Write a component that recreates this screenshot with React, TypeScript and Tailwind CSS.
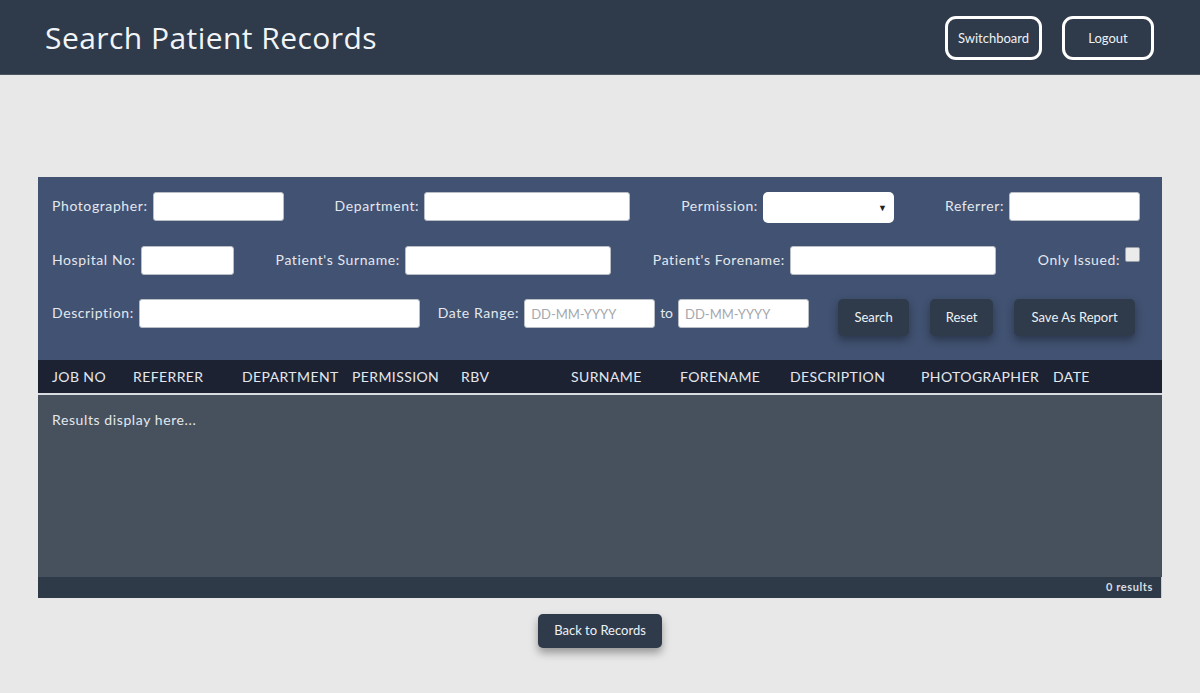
import { useState } from 'react'

const columns = [
  { label: 'JOB NO', width: 'w-[81px]' },
  { label: 'REFERRER', width: 'w-[109px]' },
  { label: 'DEPARTMENT', width: 'w-[110px]' },
  { label: 'PERMISSION', width: 'w-[109px]' },
  { label: 'RBV', width: 'w-[110px]' },
  { label: 'SURNAME', width: 'w-[109px]' },
  { label: 'FORENAME', width: 'w-[110px]' },
  { label: 'DESCRIPTION', width: 'w-[131px]' },
  { label: 'PHOTOGRAPHER', width: 'w-[132px]' },
  { label: 'DATE', width: 'flex-1' },
]

function Label({ children }: { children: React.ReactNode }) {
  return (
    <span className="text-[14px] leading-[28px] tracking-[0.6px] text-[#e4e8ee] mr-[5px] whitespace-nowrap">
      {children}
    </span>
  )
}

function TextInput({ width, placeholder }: { width: string; placeholder?: string }) {
  return (
    <input
      type="text"
      placeholder={placeholder}
      className={`${width} h-[29px] bg-white border border-[#b9bec6] rounded-[3px] px-[6px] text-[13px] text-gray-800 placeholder:text-[#a4a9b0] outline-none`}
    />
  )
}

function ActionButton({ children, width }: { children: React.ReactNode; width: string }) {
  return (
    <button className={`${width} h-[37px] bg-[#2f3b4a] text-[#eef1f5] text-[13px] rounded-[5px] shadow-[0_4px_8px_rgba(0,0,0,0.35)]`}>
      {children}
    </button>
  )
}

export default function App() {
  const [onlyIssued, setOnlyIssued] = useState(false)

  return (
    <div className="min-h-[693px] bg-[#e8e8e8] font-['Lato',sans-serif]">
      <header className="h-[75px] bg-[#2f3b4a] border-b border-[#4a5563] flex items-center justify-between pl-[45px] pr-[46px]">
        <h1 className="font-['Open_Sans',sans-serif] text-[30px] text-[#f2f5f8] tracking-[0.45px]">
          Search Patient Records
        </h1>
        <div className="flex gap-[20px] pt-[1px]">
          <button className="w-[97px] h-[44px] pt-[2px] border-[3px] border-white rounded-[11px] text-[13px] text-[#eef1f5]">
            Switchboard
          </button>
          <button className="w-[92px] h-[44px] pt-[2px] border-[3px] border-white rounded-[11px] text-[13px] text-[#eef1f5]">
            Logout
          </button>
        </div>
      </header>

      <main className="px-[38px] pt-[102px]">
        <section className="bg-[#415272] pt-[15px] pb-[24px] pl-[14px] pr-[22px]">
          <div className="h-[54px] flex items-start justify-between">
            <div className="flex">
              <Label>Photographer:</Label>
              <TextInput width="w-[131px]" />
            </div>
            <div className="flex">
              <Label>Department:</Label>
              <TextInput width="w-[206px]" />
            </div>
            <div className="flex">
              <Label>Permission:</Label>
              <div className="relative">
                <select className="appearance-none w-[131px] h-[31px] bg-white rounded-[5px] px-[6px] text-[13px] outline-none">
                  <option></option>
                  <option>Public</option>
                  <option>Restricted</option>
                </select>
                <span className="absolute right-[7px] top-[9px] text-[9px] text-[#222] pointer-events-none">▼</span>
              </div>
            </div>
            <div className="flex">
              <Label>Referrer:</Label>
              <TextInput width="w-[131px]" />
            </div>
          </div>

          <div className="h-[53px] flex items-start justify-between">
            <div className="flex">
              <Label>Hospital No:</Label>
              <TextInput width="w-[93px]" />
            </div>
            <div className="flex">
              <Label>Patient's Surname:</Label>
              <TextInput width="w-[206px]" />
            </div>
            <div className="flex">
              <Label>Patient's Forename:</Label>
              <TextInput width="w-[206px]" />
            </div>
            <div className="flex items-start">
              <Label>Only Issued:</Label>
              <input
                type="checkbox"
                checked={onlyIssued}
                onChange={(e) => setOnlyIssued(e.target.checked)}
                className="appearance-none w-[15px] h-[15px] mt-[1px] bg-[#ebebeb] border border-[#9aa0a8] rounded-[2px]"
              />
            </div>
          </div>

          <div className="flex items-start">
            <div className="flex">
              <Label>Description:</Label>
              <TextInput width="w-[281px]" />
            </div>
            <div className="flex ml-[18px]">
              <Label>Date Range:</Label>
              <TextInput width="w-[131px]" placeholder="DD-MM-YYYY" />
              <span className="text-[14px] leading-[28px] text-[#e4e8ee] mx-[5px]">to</span>
              <TextInput width="w-[131px]" placeholder="DD-MM-YYYY" />
            </div>
            <div className="flex ml-[29px] gap-[21px]">
              <ActionButton width="w-[71px]">Search</ActionButton>
              <ActionButton width="w-[63px]">Reset</ActionButton>
              <ActionButton width="w-[121px]">Save As Report</ActionButton>
            </div>
          </div>
        </section>

        <div className="h-[35px] bg-[#1c2232] border-b-2 border-[#d9dde2] flex items-center pl-[14px]">
          {columns.map((col) => (
            <span
              key={col.label}
              className={`${col.width} text-[14px] tracking-[0.4px] text-[#e4e8ee] whitespace-nowrap`}
            >
              {col.label}
            </span>
          ))}
        </div>

        <div className="h-[182px] bg-[#46515d] pl-[14px] pt-[14px]">
          <p className="text-[14px] tracking-[0.6px] text-[#e4e8ee]">Results display here...</p>
        </div>

        <div className="h-[21px] bg-[#2e3a48] flex items-center justify-end pr-[8px] border-r border-[#c8ccd2]">
          <span className="text-[11px] font-bold tracking-[0.6px] text-[#d8dde4]">0 results</span>
        </div>

        <div className="flex justify-center pt-[16px]">
          <button className="w-[124px] h-[34px] bg-[#2f3b4a] text-[#eef1f5] text-[13px] rounded-[5px] shadow-[0_5px_8px_rgba(0,0,0,0.35)]">
            Back to Records
          </button>
        </div>
      </main>
    </div>
  )
}
